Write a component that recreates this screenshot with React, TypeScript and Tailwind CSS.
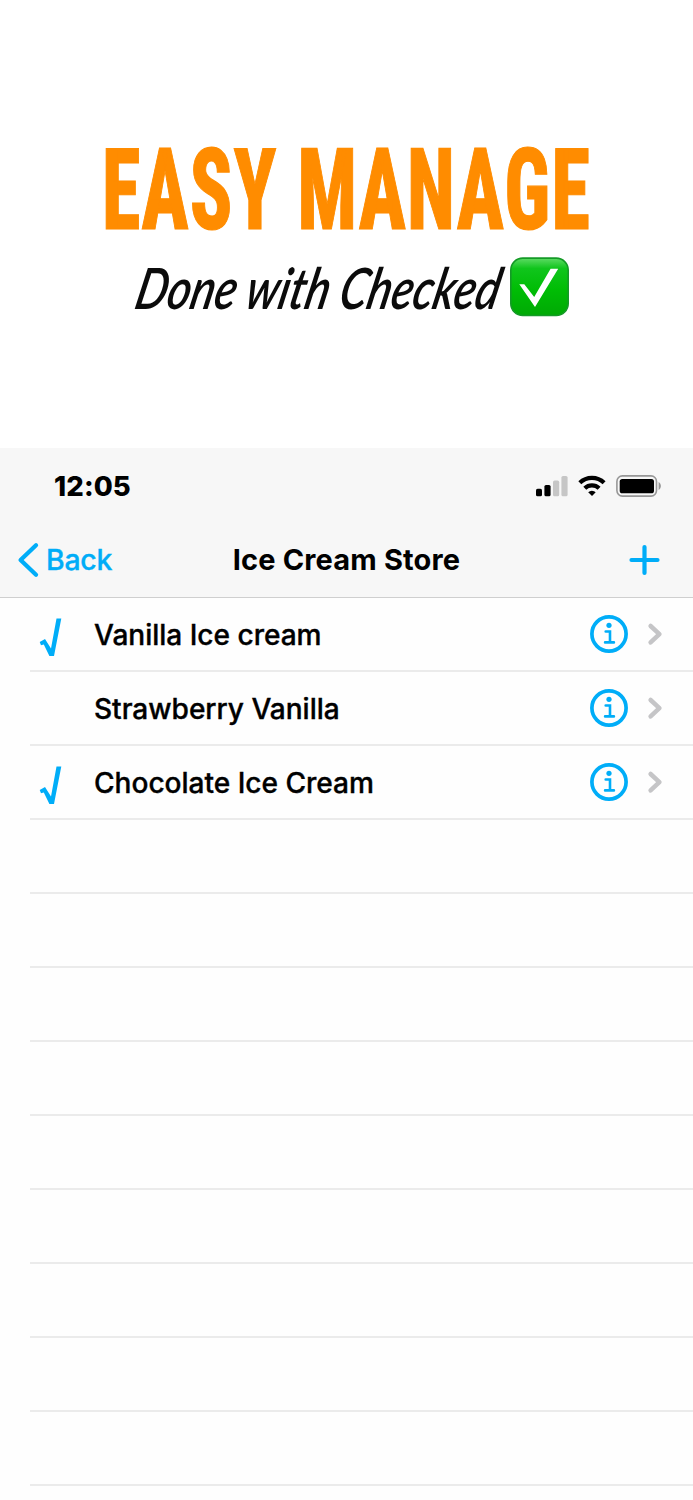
const items = [
  { name: 'Vanilla Ice cream', done: true },
  { name: 'Strawberry Vanilla', done: false },
  { name: 'Chocolate Ice Cream', done: true },
];
const emptyRows = Array.from({ length: 9 }, (_, i) => i);

function Headline() {
  return (
    <section className="flex h-[448px] flex-col bg-white">
      <h1 className="mt-[125px] ml-[102px] flex h-[132px] w-[700px] origin-left scale-x-[0.69] items-center whitespace-pre font-['Roboto_Condensed',Roboto,sans-serif] text-[113.5px] leading-[132px] font-extrabold tracking-[1.7px] text-[#ff8c00] [-webkit-text-stroke:1.2px_#ff8c00] [word-spacing:1px]">
        EASY MANAGE
      </h1>
      <div className="ml-[131px] flex h-[60px] items-center">
        <p className="w-[379px] whitespace-nowrap font-['Lato',sans-serif] text-[57px] leading-[60px] font-semibold text-[#0b0b0b] italic">
          <span className="block w-[472px] origin-bottom-left scale-x-[0.785] -skew-x-16">Done with Checked</span>
        </p>
        <svg className="h-[60px] w-[60px]" viewBox="0 0 60 60" aria-hidden="true">
          <defs>
            <linearGradient id="badge" x1="0" y1="0" x2="0" y2="1">
              <stop offset="0" stopColor="#5edb65" />
              <stop offset="0.18" stopColor="#10c51c" />
              <stop offset="0.55" stopColor="#00bd05" />
              <stop offset="1" stopColor="#00a905" />
            </linearGradient>
          </defs>
          <rect x="0.8" y="1.1" width="57.4" height="57.4" rx="12" fill="url(#badge)" stroke="#159a27" strokeWidth="1.6" />
          <path d="M9.3 27.3h5l9.900 12.700L40.600 11.700h7.600L25 50z" fill="#fff" />
        </svg>
      </div>
    </section>
  );
}

function StatusIcons() {
  return (
    <div className="flex items-center">
      <svg className="h-[24px] w-[33px]" viewBox="535 474 33 24" aria-hidden="true">
        <rect x="536" y="488.7" width="6" height="7.6" rx="1.6" />
        <rect x="544.4" y="485" width="6.2" height="11.3" rx="1.6" />
        <rect x="553" y="480.6" width="6.2" height="15.7" rx="1.6" fill="#c6c6c6" />
        <rect x="561.4" y="476" width="6.2" height="20.3" rx="1.6" fill="#c6c6c6" />
      </svg>
      <svg className="ml-[9px] h-[24px] w-[30px]" viewBox="577 474 30 24" fill="none" stroke="#000" strokeWidth="4.2" aria-hidden="true">
        <path d="M579.8 482.8a17.4 17.4 0 0 1 24.3 0" />
        <path d="M584.8 488.2a10.3 10.3 0 0 1 14.3 0" />
        <path d="M588.2 492.2a5.3 5.3 0 0 1 7.5 0L592 496z" fill="#000" stroke="none" />
      </svg>
      <svg className="ml-[8px] h-[24px] w-[48px]" viewBox="615 474 48 24" aria-hidden="true">
        <rect x="616.9" y="475.9" width="39.6" height="20.2" rx="5.5" fill="none" stroke="#979797" strokeWidth="1.6" />
        <rect x="619.7" y="478.9" width="34.3" height="14.4" rx="2.6" />
        <path d="M658.6 482c3 1.6 3 6.4 0 8z" fill="#979797" />
      </svg>
    </div>
  );
}

function CheckMark() {
  return (
    <svg className="h-[40px] w-[24px]" viewBox="39 617 24 40" aria-hidden="true">
      <path d="M56.5 618.4h4.8L54 656h-4.6L43.8 644.4l-2.8.8-1.3-3.3 5.3-3 6 9.5z" fill="#00adf8" />
    </svg>
  );
}

function InfoIcon() {
  return (
    <svg className="h-[40px] w-[40px]" viewBox="0 0 40 40" aria-hidden="true">
      <circle cx="20" cy="20" r="17.1" fill="none" stroke="#00adf8" strokeWidth="3.7" />
      <circle cx="20" cy="11.3" r="2.6" fill="#00adf8" />
      <path d="M16.7 17.5h4.3v10.8M16.1 28.4h8.8" fill="none" stroke="#00adf8" strokeWidth="2.6" strokeLinecap="round" />
    </svg>
  );
}

export default function App() {
  return (
    <main className="h-[1500px] w-[693px] overflow-hidden bg-[#fefefe] font-['Inter',sans-serif] text-black">
      <Headline />
      <header className="h-[150px] border-b border-[#cfcfcf] bg-[#f7f7f7]">
        <div className="flex h-[76px] items-center justify-between pr-[30px] pl-[54px]">
          <span className="text-[27.5px] leading-[34px] font-extrabold tracking-[0.1px]">12:05</span>
          <StatusIcons />
        </div>
        <nav className="grid h-[72px] grid-cols-[200px_1fr_200px] items-center">
          <a className="flex items-center pl-[16px] text-[28.4px] leading-[34px] font-medium tracking-[-0.2px] text-[#00adf8] [-webkit-text-stroke:0.35px_#00adf8]">
            <svg className="h-[36px] w-[24px]" viewBox="0 0 24 36" fill="none" stroke="#00adf8" strokeWidth="4.3" strokeLinecap="round" strokeLinejoin="round" aria-hidden="true">
              <path d="M20 3.3L4.6 18 20 32.7" />
            </svg>
            <span className="ml-[6px]">Back</span>
          </a>
          <h2 className="text-center text-[29px] leading-[34px] font-bold tracking-[0.15px] whitespace-nowrap">Ice Cream Store</h2>
          <button className="mr-[33px] justify-self-end" aria-label="Add">
            <svg className="block h-[32px] w-[32px]" viewBox="0 0 32 32" stroke="#00adf8" strokeWidth="4.2" strokeLinecap="round" aria-hidden="true">
              <path d="M16.5 3v26M3.5 16h26" />
            </svg>
          </button>
        </nav>
      </header>
      <ul>
        {items.map((item) => (
          <li key={item.name} className="ml-[30px] flex h-[74px] items-center border-b-2 border-[#ebebeb]">
            <span className="ml-[9px] flex h-[42px] w-[55px] pt-[4px]">{item.done && <CheckMark />}</span>
            <span className="flex-1 pt-[1px] text-[28.1px] leading-[34px] font-medium tracking-[-0.03px] [-webkit-text-stroke:0.35px_#000]">{item.name}</span>
            <InfoIcon />
            <svg className="mr-[30px] ml-[17px] h-[24px] w-[17px]" viewBox="646 622 17 24" fill="none" stroke="#c5c5c7" strokeWidth="4.5" strokeLinecap="round" strokeLinejoin="round" aria-hidden="true">
              <path d="M650.6 626l8.8 8.2-8.8 8.2" />
            </svg>
          </li>
        ))}
        {emptyRows.map((row) => (
          <li key={row} className="ml-[30px] h-[74px] border-b-2 border-[#ebebeb]" />
        ))}
      </ul>
    </main>
  );
}
